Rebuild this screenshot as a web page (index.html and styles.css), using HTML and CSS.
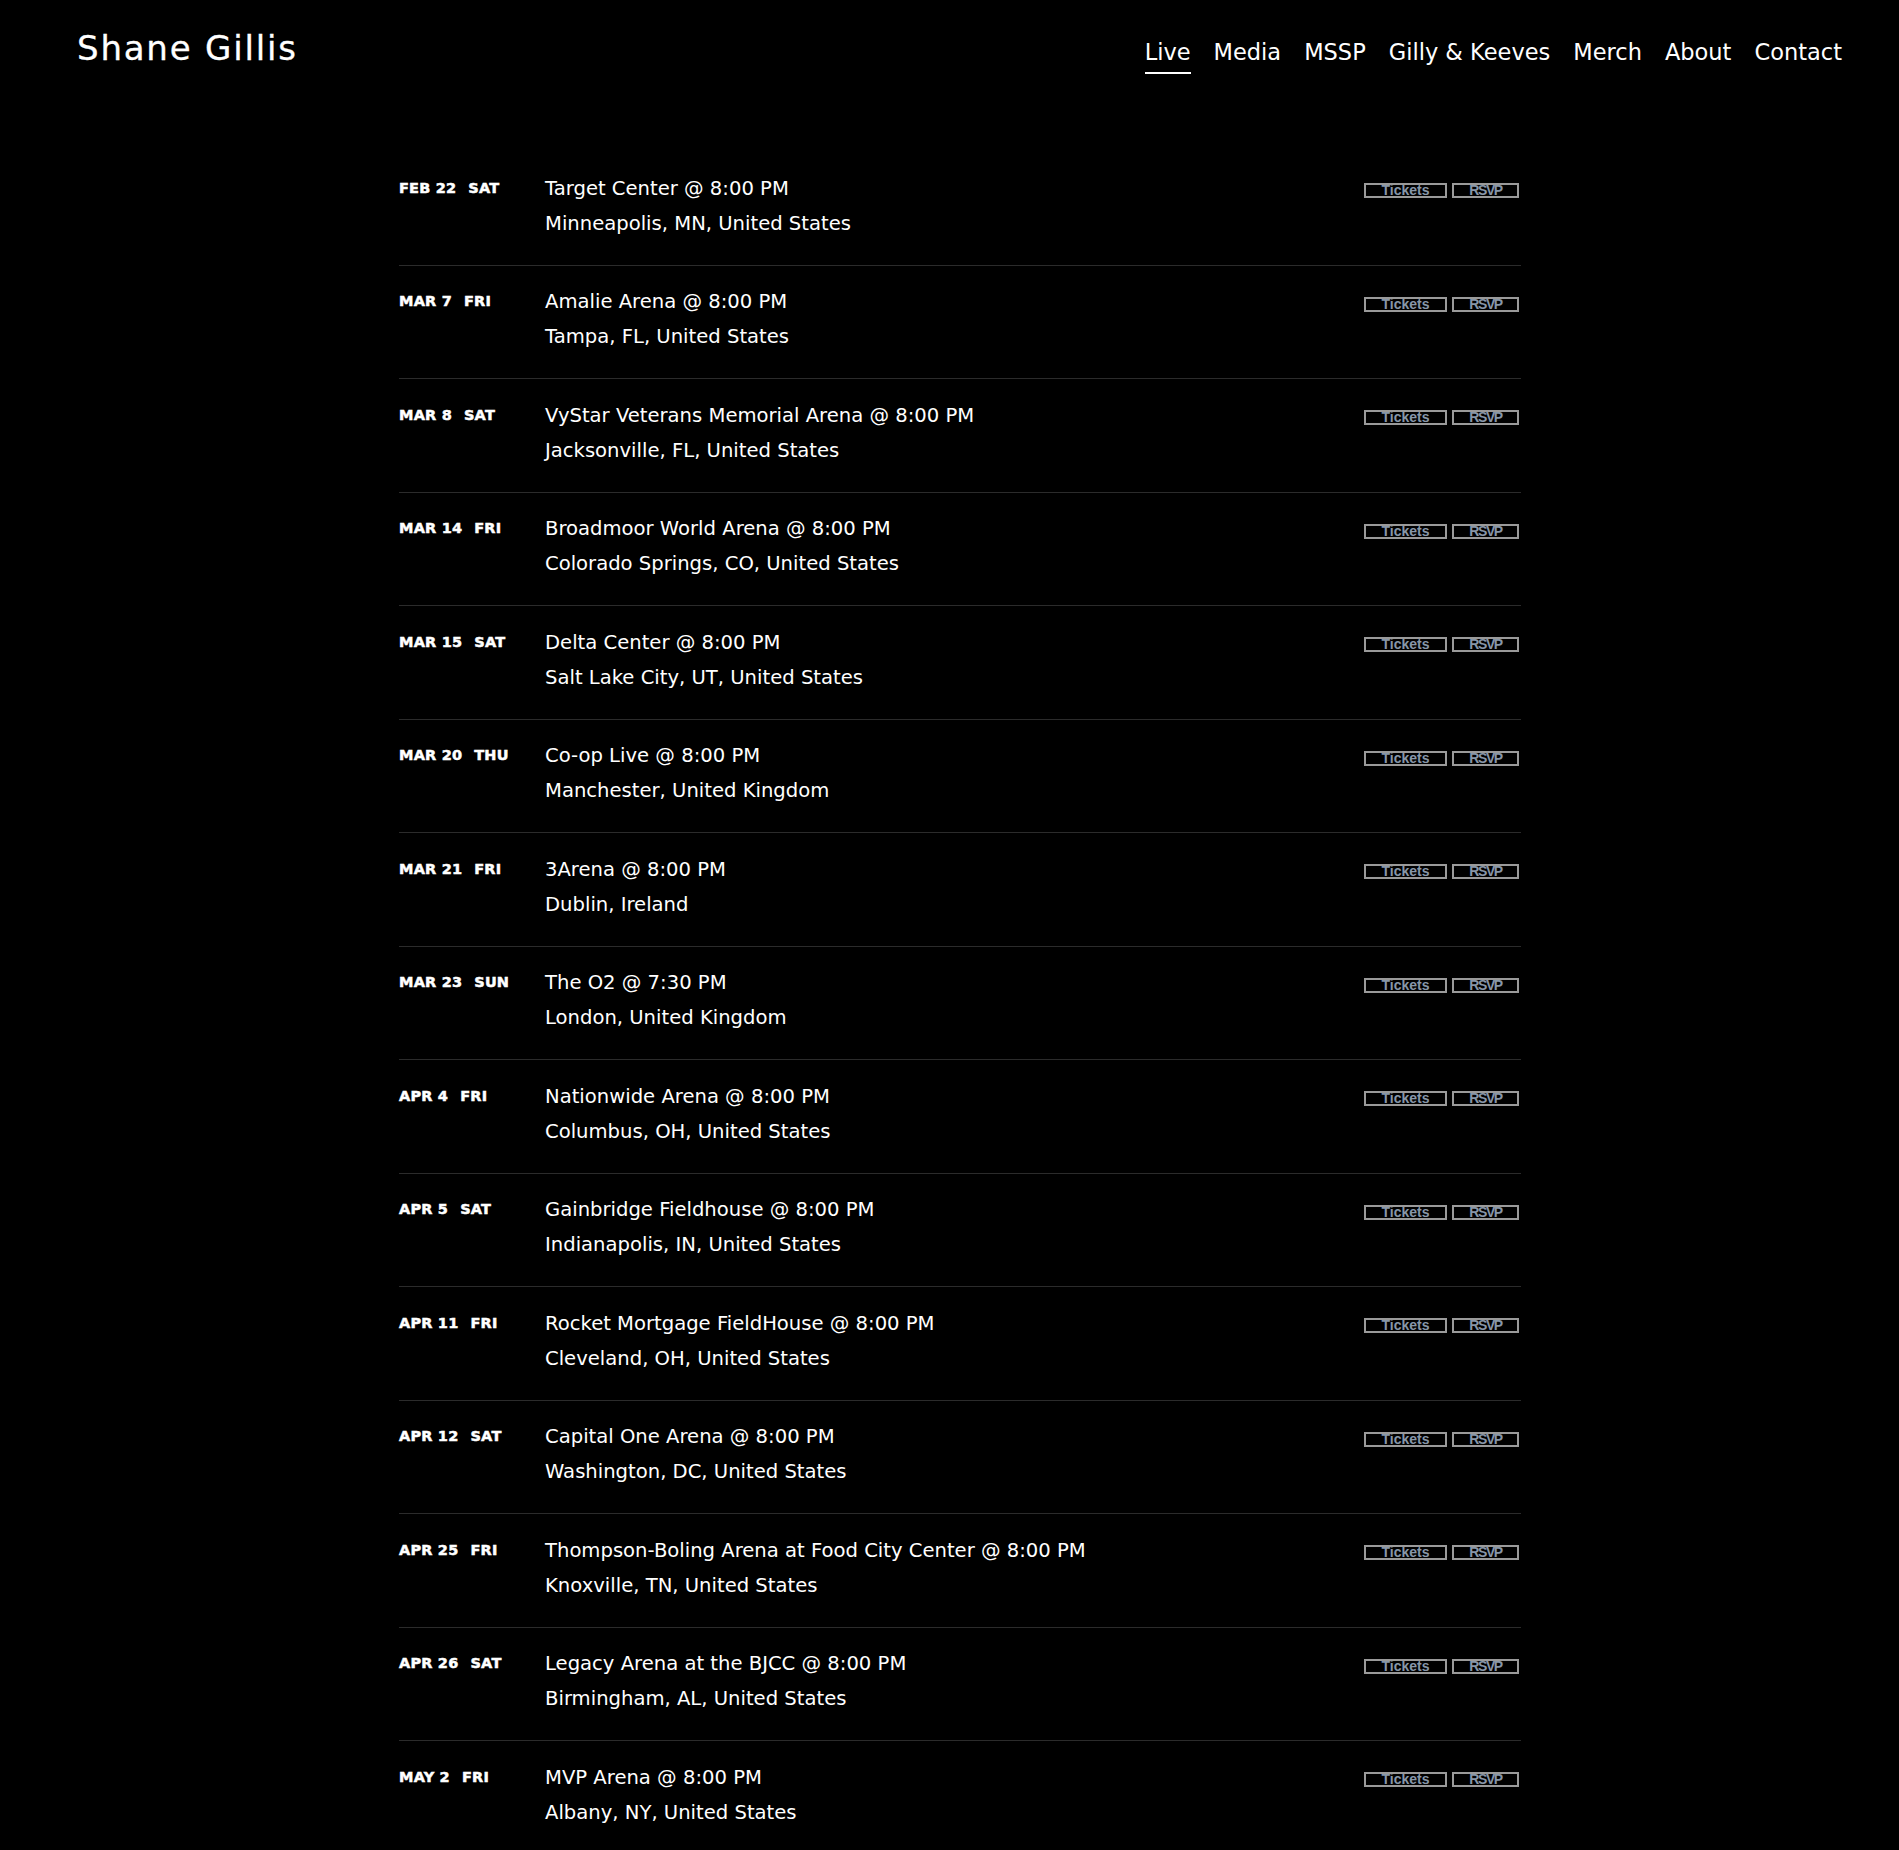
FILE: index.html
```html
<!DOCTYPE html>
<html lang="en">
<head>
<meta charset="utf-8">
<title>Shane Gillis — Live</title>
<link rel="stylesheet" href="styles.css">
</head>
<body>
<header class="site-header">
  <a class="logo" href="#">Shane Gillis</a>
  <nav class="nav">
    <a class="nav-link active" href="#">Live</a>
    <a class="nav-link" href="#">Media</a>
    <a class="nav-link" href="#">MSSP</a>
    <a class="nav-link" href="#">Gilly &amp; Keeves</a>
    <a class="nav-link" href="#">Merch</a>
    <a class="nav-link" href="#">About</a>
    <a class="nav-link" href="#">Contact</a>
  </nav>
</header>
<main class="shows">
  <div class="show"><div class="date"><span class="md">FEB 22</span><span class="dow">SAT</span></div><div class="info"><div>Target Center @ 8:00 PM</div><div>Minneapolis, MN, United States</div></div><div class="btns"><a class="btn btn-t">Tickets</a><a class="btn btn-r">RSVP</a></div></div>
  <div class="show"><div class="date"><span class="md">MAR 7</span><span class="dow">FRI</span></div><div class="info"><div>Amalie Arena @ 8:00 PM</div><div>Tampa, FL, United States</div></div><div class="btns"><a class="btn btn-t">Tickets</a><a class="btn btn-r">RSVP</a></div></div>
  <div class="show"><div class="date"><span class="md">MAR 8</span><span class="dow">SAT</span></div><div class="info"><div>VyStar Veterans Memorial Arena @ 8:00 PM</div><div>Jacksonville, FL, United States</div></div><div class="btns"><a class="btn btn-t">Tickets</a><a class="btn btn-r">RSVP</a></div></div>
  <div class="show"><div class="date"><span class="md">MAR 14</span><span class="dow">FRI</span></div><div class="info"><div>Broadmoor World Arena @ 8:00 PM</div><div>Colorado Springs, CO, United States</div></div><div class="btns"><a class="btn btn-t">Tickets</a><a class="btn btn-r">RSVP</a></div></div>
  <div class="show"><div class="date"><span class="md">MAR 15</span><span class="dow">SAT</span></div><div class="info"><div>Delta Center @ 8:00 PM</div><div>Salt Lake City, UT, United States</div></div><div class="btns"><a class="btn btn-t">Tickets</a><a class="btn btn-r">RSVP</a></div></div>
  <div class="show"><div class="date"><span class="md">MAR 20</span><span class="dow">THU</span></div><div class="info"><div>Co-op Live @ 8:00 PM</div><div>Manchester, United Kingdom</div></div><div class="btns"><a class="btn btn-t">Tickets</a><a class="btn btn-r">RSVP</a></div></div>
  <div class="show"><div class="date"><span class="md">MAR 21</span><span class="dow">FRI</span></div><div class="info"><div>3Arena @ 8:00 PM</div><div>Dublin, Ireland</div></div><div class="btns"><a class="btn btn-t">Tickets</a><a class="btn btn-r">RSVP</a></div></div>
  <div class="show"><div class="date"><span class="md">MAR 23</span><span class="dow">SUN</span></div><div class="info"><div>The O2 @ 7:30 PM</div><div>London, United Kingdom</div></div><div class="btns"><a class="btn btn-t">Tickets</a><a class="btn btn-r">RSVP</a></div></div>
  <div class="show"><div class="date"><span class="md">APR 4</span><span class="dow">FRI</span></div><div class="info"><div>Nationwide Arena @ 8:00 PM</div><div>Columbus, OH, United States</div></div><div class="btns"><a class="btn btn-t">Tickets</a><a class="btn btn-r">RSVP</a></div></div>
  <div class="show"><div class="date"><span class="md">APR 5</span><span class="dow">SAT</span></div><div class="info"><div>Gainbridge Fieldhouse @ 8:00 PM</div><div>Indianapolis, IN, United States</div></div><div class="btns"><a class="btn btn-t">Tickets</a><a class="btn btn-r">RSVP</a></div></div>
  <div class="show"><div class="date"><span class="md">APR 11</span><span class="dow">FRI</span></div><div class="info"><div>Rocket Mortgage FieldHouse @ 8:00 PM</div><div>Cleveland, OH, United States</div></div><div class="btns"><a class="btn btn-t">Tickets</a><a class="btn btn-r">RSVP</a></div></div>
  <div class="show"><div class="date"><span class="md">APR 12</span><span class="dow">SAT</span></div><div class="info"><div>Capital One Arena @ 8:00 PM</div><div>Washington, DC, United States</div></div><div class="btns"><a class="btn btn-t">Tickets</a><a class="btn btn-r">RSVP</a></div></div>
  <div class="show"><div class="date"><span class="md">APR 25</span><span class="dow">FRI</span></div><div class="info"><div>Thompson-Boling Arena at Food City Center @ 8:00 PM</div><div>Knoxville, TN, United States</div></div><div class="btns"><a class="btn btn-t">Tickets</a><a class="btn btn-r">RSVP</a></div></div>
  <div class="show"><div class="date"><span class="md">APR 26</span><span class="dow">SAT</span></div><div class="info"><div>Legacy Arena at the BJCC @ 8:00 PM</div><div>Birmingham, AL, United States</div></div><div class="btns"><a class="btn btn-t">Tickets</a><a class="btn btn-r">RSVP</a></div></div>
  <div class="show"><div class="date"><span class="md">MAY 2</span><span class="dow">FRI</span></div><div class="info"><div>MVP Arena @ 8:00 PM</div><div>Albany, NY, United States</div></div><div class="btns"><a class="btn btn-t">Tickets</a><a class="btn btn-r">RSVP</a></div></div>
</main>
</body>
</html>
```

FILE: styles.css
```css
html, body {
  margin: 0;
  padding: 0;
  background: #000;
  color: #fff;
}
body {
  font-family: "DejaVu Sans", Lato, sans-serif;
}
a {
  color: inherit;
  text-decoration: none;
}
.site-header {
  display: flex;
  justify-content: space-between;
  align-items: flex-start;
  padding: 26px 57px 0 77px;
}
.logo {
  font-size: 34px;
  line-height: 38px;
  letter-spacing: 1.8px;
  margin-top: 2.5px;
  -webkit-text-stroke: 0.3px #fff;
}
.nav {
  display: flex;
  gap: 23px;
  margin-top: 12px;
}
.nav-link {
  font-size: 22.5px;
  line-height: 28px;
  padding-bottom: 6px;
  border-bottom: 2px solid transparent;
}
.nav-link.active {
  border-bottom-color: #fff;
}
.shows {
  padding: 78px 378px 0 399px;
}
.show {
  display: grid;
  grid-template-columns: 146px 1fr auto;
  padding: 18.5px 0 24px;
  border-bottom: 1px solid #2b2b2b;
}
.date {
  font-weight: bold;
  font-size: 14.5px;
  line-height: 35px;
  letter-spacing: 0.2px;
  white-space: nowrap;
  -webkit-text-stroke: 0.5px #fff;
}
.dow {
  margin-left: 12px;
}
.info {
  font-size: 19.6px;
  line-height: 35px;
}
.btns {
  display: flex;
  gap: 5px;
  margin-top: 12.5px;
  margin-right: 2px;
  align-self: start;
}
.btn {
  box-sizing: border-box;
  height: 15px;
  border: 2px solid #9a9a9a;
  overflow: hidden;
  font-family: "Liberation Sans", Arial, sans-serif;
  font-weight: bold;
  font-size: 14px;
  line-height: 11px;
  color: #8796a8;
  text-align: center;
}
.btn-t {
  width: 83px;
}
.btn-r {
  width: 67px;
  letter-spacing: -1.4px;
}
```
